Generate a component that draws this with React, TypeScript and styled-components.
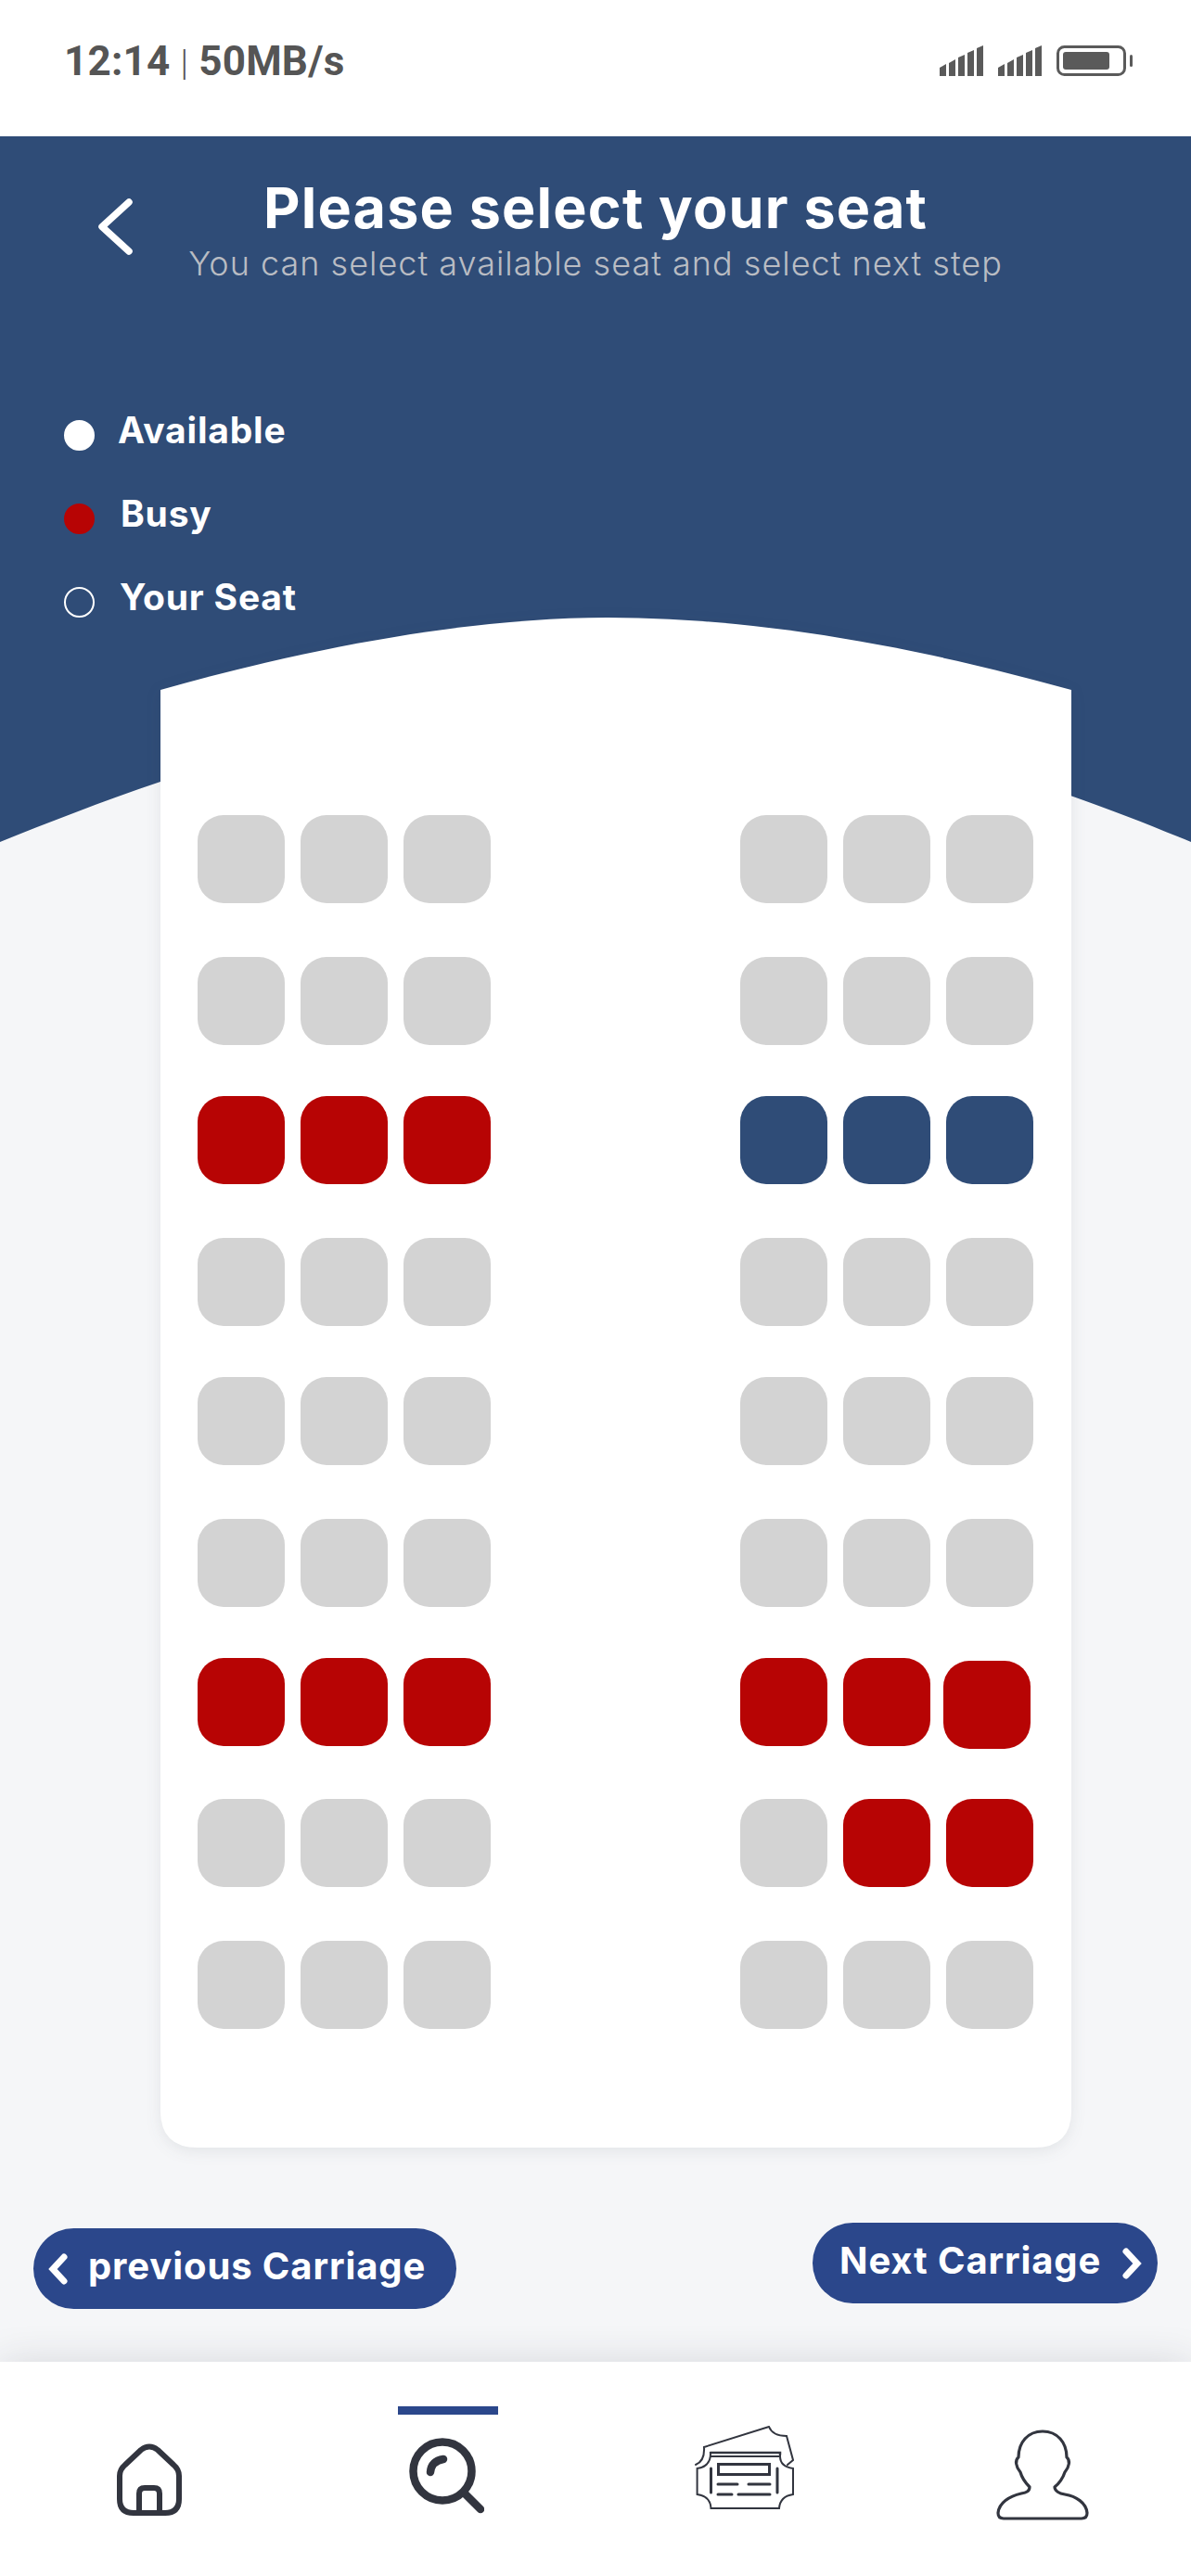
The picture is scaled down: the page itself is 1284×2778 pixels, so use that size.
import styled, { createGlobalStyle } from "styled-components";

type SeatKind = "free" | "busy" | "mine";

const F: SeatKind = "free";
const B: SeatKind = "busy";
const M: SeatKind = "mine";

const rows: SeatKind[][] = [
  [F, F, F, F, F, F],
  [F, F, F, F, F, F],
  [B, B, B, M, M, M],
  [F, F, F, F, F, F],
  [F, F, F, F, F, F],
  [F, F, F, F, F, F],
  [B, B, B, B, B, B],
  [F, F, F, F, B, B],
  [F, F, F, F, F, F],
];

const seatColors = { free: "#d3d3d3", busy: "#b70404", mine: "#2f4c77" };

function Signal() {
  return (
    <svg width="47" height="33" viewBox="0 0 47 33" fill="#5a5a5a">
      <polygon points="0,24 7,20 7,33 0,33" />
      <polygon points="10,19 17,15 17,33 10,33" />
      <polygon points="20,13 27,10 27,33 20,33" />
      <polygon points="30,8 37,5 37,33 30,33" />
      <polygon points="40,3 47,0 47,33 40,33" />
    </svg>
  );
}

function Battery() {
  return (
    <svg width="82" height="33" viewBox="0 0 82 33">
      <rect x="1.5" y="1.5" width="72" height="30" rx="7" fill="none" stroke="#5a5a5a" strokeWidth="3" />
      <rect x="7" y="7" width="50" height="19" rx="3" fill="#5a5a5a" />
      <rect x="79" y="10" width="3" height="13" rx="1.5" fill="#5a5a5a" />
    </svg>
  );
}

function Chevron({ left }: { left?: boolean }) {
  return (
    <svg width="23" height="34" viewBox="0 0 23 34" fill="none" stroke="#fff" strokeWidth="7" strokeLinecap="round" strokeLinejoin="miter">
      <path d={left ? "M18 4 L6 17 L18 30" : "M5 4 L17 17 L5 30"} />
    </svg>
  );
}

function HomeIcon() {
  return (
    <svg width="70" height="78" viewBox="0 0 70 78" fill="none" stroke="#32353f" strokeWidth="6" strokeLinejoin="round">
      <path d="M9 23 L26 7 Q35 0 44 7 L61 23 Q67 28 67 35 V60 Q67 75 52 75 H18 Q3 75 3 60 V35 Q3 28 9 23 Z" />
      <path d="M24 75 V54 Q24 48 30 48 H40 Q46 48 46 54 V75" />
    </svg>
  );
}

function SearchIcon() {
  return (
    <svg width="81" height="82" viewBox="0 0 81 82" fill="none" stroke="#32353f" strokeWidth="8.5" strokeLinecap="round">
      <circle cx="36" cy="36" r="31.5" />
      <path d="M61 61 L77 77" />
      <path d="M23 37 Q24 25 37 23" />
    </svg>
  );
}

function TicketIcon() {
  return (
    <svg width="107" height="90" viewBox="0 0 107 90" fill="none" stroke="#32353f" strokeWidth="2" strokeLinecap="round">
      <path d="M1 42 Q11 38 10 23 L80 1 Q84 11 99 11 L106 37 L100 42" />
      <path d="M17 29 H92 V31" strokeWidth="2.5" />
      <path d="M17 33 H92 Q92 44 106 46 V74 Q92 76 91 89 H17.5 Q17 76 2.6 74 V46 Q17 44 17 30" />
      <rect x="25.5" y="41.5" width="55" height="11" strokeWidth="3" />
      <path d="M17.5 46 V72 M89 46 V72 M25 63 H46 M58 63 H81 M25 74 H40 M47 74 H81" strokeWidth="3" />
    </svg>
  );
}

function PersonIcon() {
  return (
    <svg width="100" height="98" viewBox="0 0 100 98" fill="none" stroke="#32353f" strokeWidth="3.2" strokeLinejoin="round">
      <path d="M50 2 C34 2 24 14 24 30 C20 33 21 40 26 46 C28 53 32 58 36 62 C36 67 32 68 27 69 C14 72 3 79 2 90 C2 94 4 96 8 96 H92 C96 96 98 94 98 90 C97 79 86 72 74 70 C68 69 63 66 63 62 C68 58 72 52 74 46 C79 40 80 33 76 30 C76 14 66 2 50 2 Z" />
    </svg>
  );
}

export default function App() {
  return (
    <>
      <GlobalStyle />
      <Screen>
        <StatusBar>
          <StatusText>
            12:14 <StatusDivider>|</StatusDivider> 50MB/s
          </StatusText>
          <StatusIcons>
            <Signal />
            <Signal />
            <Battery />
          </StatusIcons>
        </StatusBar>

        <Hero>
          <Header>
            <BackButton>
              <svg width="38" height="61" viewBox="0 0 38 61" fill="none" stroke="#fff" strokeWidth="7.5" strokeLinecap="round" strokeLinejoin="round">
                <path d="M34 4 L5 30.5 L34 57" />
              </svg>
            </BackButton>
            <Titles>
              <Title>Please select your seat</Title>
              <Subtitle>You can select available seat and select next step</Subtitle>
            </Titles>
          </Header>
          <Legend>
            <LegendRow>
              <Dot $fill="#fff" />
              <LegendLabel>Available</LegendLabel>
            </LegendRow>
            <LegendRow>
              <Dot $fill="#b70404" />
              <LegendLabel $shift={3}>Busy</LegendLabel>
            </LegendRow>
            <LegendRow>
              <Dot $fill="transparent" />
              <LegendLabel $shift={2}>Your Seat</LegendLabel>
            </LegendRow>
          </Legend>
        </Hero>

        <Main>
          <CardShadow>
            <Card>
              <SeatGrid>
                {rows.map((row, r) =>
                  row.map((kind, c) => (
                    <Seat key={`${r}-${c}`} $kind={kind} $column={c} $nudged={r === 6 && c === 5} />
                  ))
                )}
              </SeatGrid>
            </Card>
          </CardShadow>
          <Pager>
            <PagerButton $width={456} $drop={6} $inset={15} $gap={21}>
              <Chevron left />
              <PagerLabel>previous Carriage</PagerLabel>
            </PagerButton>
            <PagerButton $width={372} $drop={0} $inset={29} $gap={22}>
              <PagerLabel>Next Carriage</PagerLabel>
              <Chevron />
            </PagerButton>
          </Pager>
        </Main>

        <BottomNav>
          <NavItem $top={88}>
            <HomeIcon />
          </NavItem>
          <NavItem $top={82}>
            <ActiveBar />
            <SearchIcon />
          </NavItem>
          <NavItem $top={69}>
            <TicketIcon />
          </NavItem>
          <NavItem $top={73}>
            <PersonIcon />
          </NavItem>
        </BottomNav>
      </Screen>
    </>
  );
}

const GlobalStyle = createGlobalStyle`
  html, body {
    margin: 0;
    padding: 0;
    background: #fff;
  }
  body {
    font-family: Inter, "Liberation Sans", sans-serif;
  }
`;

const Screen = styled.div`
  width: 1284px;
  height: 2778px;
  display: flex;
  flex-direction: column;
  overflow: hidden;
  background: #f5f6f8;
`;

const StatusBar = styled.div`
  height: 147px;
  flex: none;
  background: #fff;
  display: flex;
  justify-content: space-between;
  align-items: flex-start;
  padding: 49px 63px 0 69px;
  box-sizing: border-box;
`;

const StatusText = styled.div`
  font-family: Roboto, sans-serif;
  font-weight: 700;
  font-size: 44px;
  line-height: 34px;
  letter-spacing: 0.2px;
  color: #555;
  white-space: nowrap;
`;

const StatusDivider = styled.span`
  font-weight: 300;
  font-size: 38px;
`;

const StatusIcons = styled.div`
  display: flex;
  gap: 16px;
`;

const Hero = styled.div`
  height: 761px;
  flex: none;
  background: #2f4c77;
  clip-path: path("M0 0 H1284 V761 C1240 743 1200 727 1154 711 C980 650 800 620 650 620 C500 620 330 645 173 696 C110 717 50 741 0 761 Z");
`;

const Header = styled.div`
  display: grid;
  grid-template-columns: 1fr auto 1fr;
  padding-top: 43px;
`;

const BackButton = styled.div`
  padding: 24px 0 0 105px;
`;

const Titles = styled.div`
  text-align: center;
`;

const Title = styled.h1`
  margin: 0;
  font-size: 61px;
  line-height: 68px;
  font-weight: 700;
  letter-spacing: 1.2px;
  color: #fff;
`;

const Subtitle = styled.div`
  margin-top: 4px;
  font-size: 36px;
  line-height: 44px;
  font-weight: 300;
  letter-spacing: 1px;
  color: #b9bcc3;
  white-space: nowrap;
`;

const Legend = styled.div`
  display: flex;
  flex-direction: column;
  gap: 44px;
  padding: 134px 0 0 69px;
`;

const LegendRow = styled.div`
  display: flex;
  align-items: center;
  height: 46px;
`;

const Dot = styled.span<{ $fill: string }>`
  width: 33px;
  height: 33px;
  margin-top: 13px;
  border-radius: 50%;
  box-sizing: border-box;
  border: 2px solid ${(p) => (p.$fill === "#b70404" ? "#b70404" : "#fff")};
  background: ${(p) => p.$fill};
`;

const LegendLabel = styled.span<{ $shift?: number }>`
  margin-left: ${(p) => 25 + (p.$shift ?? 0)}px;
  font-size: 39px;
  font-weight: 700;
  letter-spacing: 0.8px;
  color: #fff;
`;

const Main = styled.div`
  flex: 1;
  display: flex;
  flex-direction: column;
`;

const CardShadow = styled.div`
  margin: -242px 0 0 173px;
  width: 982px;
  height: 1650px;
  filter: drop-shadow(0 4px 8px rgba(40, 50, 70, 0.09));
`;

const Card = styled.div`
  height: 100%;
  background: #fff;
  padding: 213px 41px 0 40px;
  box-sizing: border-box;
  clip-path: path("M0 78 C170 30 340 0 482 0 C640 0 810 30 982 78 V1610 Q982 1650 942 1650 H40 Q0 1650 0 1610 Z");
`;

const SeatGrid = styled.div`
  display: grid;
  grid-template-columns: repeat(3, 94px) 1fr repeat(3, 94px);
  grid-template-rows: 153px 150px 153px 150px 153px 150px 152px 153px 95px;
  column-gap: 17px;
`;

const Seat = styled.div<{ $kind: SeatKind; $column: number; $nudged: boolean }>`
  height: 95px;
  border-radius: 28px;
  background: ${(p) => seatColors[p.$kind]};
  grid-column: ${(p) => (p.$column < 3 ? p.$column + 1 : p.$column + 2)};
  transform: ${(p) => (p.$nudged ? "translate(-3px, 3px)" : "none")};
`;

const Pager = styled.div`
  display: flex;
  justify-content: space-between;
  align-items: flex-start;
  padding: 81px 36px 0;
`;

const PagerButton = styled.div<{ $width: number; $drop: number; $inset: number; $gap: number }>`
  width: ${(p) => p.$width}px;
  height: 87px;
  margin-top: ${(p) => p.$drop}px;
  padding-left: ${(p) => p.$inset}px;
  box-sizing: border-box;
  border-radius: 44px;
  background: #2b478b;
  color: #fff;
  font-size: 40px;
  font-weight: 700;
  letter-spacing: 0.9px;
  display: flex;
  align-items: center;
  gap: ${(p) => p.$gap}px;
  white-space: nowrap;
`;

const PagerLabel = styled.span`
  margin-bottom: 6px;
`;

const BottomNav = styled.nav`
  height: 231px;
  flex: none;
  background: #fff;
  display: grid;
  grid-template-columns: repeat(4, 1fr);
  box-shadow: 0 0 40px rgba(40, 45, 60, 0.14);
`;

const NavItem = styled.div<{ $top: number }>`
  position: relative;
  display: flex;
  justify-content: center;
  align-items: flex-start;
  padding-top: ${(p) => p.$top}px;
`;

const ActiveBar = styled.span`
  position: absolute;
  top: 48px;
  left: 108px;
  width: 108px;
  height: 9px;
  background: #2b478b;
`;
